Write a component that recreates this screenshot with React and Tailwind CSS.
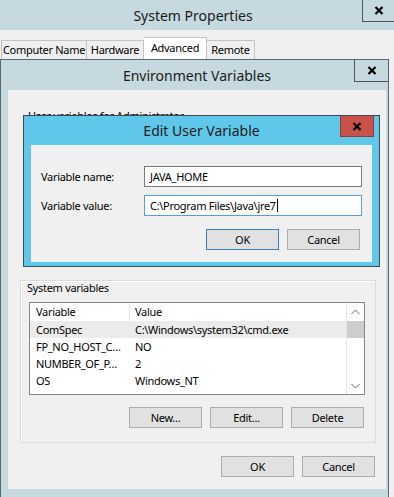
import React from "react";

const XGlyph = () => (
  <svg width="10" height="9" viewBox="0 0 10 9">
    <path d="M1.5 1l7 7M8.5 1l-7 7" stroke="#000" strokeWidth="2.2" />
  </svg>
);

const Chevron = ({ up }) => (
  <svg width="9" height="6" viewBox="0 0 9 6">
    <path d={up ? "M0.5 5l4-4 4 4" : "M0.5 1l4 4 4-4"} stroke="#606060" strokeWidth="1" fill="none" />
  </svg>
);

const Btn = ({ children, primary }) => (
  <div
    className={
      primary
        ? "flex h-[21px] w-[73px] items-center justify-center border border-[#3c7fb1] bg-[#e1e1e1]"
        : "flex h-[21px] w-[73px] items-center justify-center border border-[#adadad] bg-[#e1e1e1]"
    }
  >
    {children}
  </div>
);

const rows = [
  ["ComSpec", "C:\\Windows\\system32\\cmd.exe"],
  ["FP_NO_HOST_C…", "NO"],
  ["NUMBER_OF_P…", "2"],
  ["OS", "Windows_NT"],
  ["Path", "%SystemRoot%\\system32;%SystemRoot%;%Sys…"],
];

export default function App() {
  return (
    <div className="relative h-[497px] w-[394px] overflow-hidden whitespace-nowrap bg-[#f0f0f0] font-['Noto_Sans','Open_Sans',sans-serif] text-[11px] leading-[14px] tracking-[-0.3px] text-black">
      {/* System Properties window behind */}
      <div className="flex h-[30px] bg-[#c5d9df]">
        <div className="flex-1 pl-[24px] pt-[6px] text-center text-[14px] leading-[20px] tracking-normal text-[#1a1a1a]">
          System Properties
        </div>
        <div className="flex h-[22px] w-[32px] items-center justify-center border-b border-l border-[#4d5357]">
          <XGlyph />
        </div>
      </div>
      <div className="flex items-start pl-[1px] pt-[7px]">
        <div className="mt-[3px] flex h-[19px] w-[86px] items-center justify-center border border-b-0 border-[#c4c4c4]">
          Computer Name
        </div>
        <div className="mt-[3px] flex h-[19px] w-[57px] items-center justify-center border border-b-0 border-l-0 border-[#c4c4c4]">
          Hardware
        </div>
        <div className="flex h-[23px] w-[63px] items-center justify-center border border-b-0 border-l-0 border-[#c4c4c4] bg-white pb-[3px]">
          Advanced
        </div>
        <div className="mt-[3px] flex h-[19px] w-[48px] items-center justify-center border border-b-0 border-l-0 border-[#c4c4c4]">
          Remote
        </div>
      </div>

      {/* Environment Variables window */}
      <div className="absolute left-0 top-[59px] flex h-[439px] w-[389px] flex-col border border-[#5d666b] bg-[#c5d9df]">
        <div className="flex h-[30px] shrink-0">
          <div className="flex-1 pl-[39px] pt-[6px] text-center text-[14px] leading-[20px] tracking-normal text-[#1a1a1a]">
            Environment Variables
          </div>
          <div className="flex h-[22px] w-[34px] items-center justify-center border-b border-l border-[#4d5357]">
            <XGlyph />
          </div>
        </div>
        <div className="mb-[8px] ml-[7px] mr-[2px] flex flex-1 flex-col bg-[#f0f0f0]">
          <div className="pl-[20px] pt-[19px]">User variables for Administrator</div>

          {/* System variables group */}
          <div className="ml-[12px] mt-[157px] flex h-[163px] w-[356px] flex-col border border-[#dcdcdc] shadow-[inset_1px_1px_0_#ffffff]">
            <div className="pl-[6px]">System variables</div>
            <div className="ml-[8px] mt-[7px] flex h-[93px] w-[336px] overflow-hidden border border-[#828790] bg-white">
              <div className="flex-1 overflow-hidden">
                <div className="flex h-[18px] items-center">
                  <div className="flex h-full w-[100px] items-center border-r border-[#e5e5e5] pl-[6px]">Variable</div>
                  <div className="pl-[5px]">Value</div>
                </div>
                {rows.map(([k, v], i) => (
                  <div
                    key={k}
                    className={
                      i === 0
                        ? "flex h-[17px] items-center bg-[#ebebeb]"
                        : "flex h-[17px] items-center"
                    }
                  >
                    <div className="w-[100px] shrink-0 pl-[6px]">{k}</div>
                    <div className="pl-[5px]">{v}</div>
                  </div>
                ))}
              </div>
              <div className="flex w-[18px] flex-col border-l border-[#e3e3e3] bg-white">
                <div className="flex h-[18px] items-center justify-center">
                  <Chevron up />
                </div>
                <div className="h-[17px] bg-[#cdcdcd]" />
                <div className="flex-1" />
                <div className="flex h-[17px] items-center justify-center">
                  <Chevron />
                </div>
              </div>
            </div>
            <div className="mt-[12px] flex justify-end gap-[8px] pr-[11px]">
              <Btn>New...</Btn>
              <Btn>Edit...</Btn>
              <Btn>Delete</Btn>
            </div>
          </div>

          <div className="mt-[13px] flex justify-end gap-[8px] pr-[11px]">
            <Btn>OK</Btn>
            <Btn>Cancel</Btn>
          </div>
        </div>
      </div>

      {/* Edit User Variable dialog */}
      <div className="absolute left-[23px] top-[115px] flex h-[152px] w-[357px] flex-col border border-[#3d4a50] bg-[#5fc8ea]">
        <div className="flex h-[29px] shrink-0">
          <div className="flex-1 pl-[39px] pt-[5px] text-center text-[14px] leading-[20px] tracking-normal text-[#1a1a1a]">
            Edit User Variable
          </div>
          <div className="mr-[5px] flex h-[21px] w-[34px] items-center justify-center border border-t-0 border-[#8a3d36] bg-[#c8524a]">
            <XGlyph />
          </div>
        </div>
        <div className="mx-[7px] flex h-[117px] flex-col bg-[#f0f0f0]">
          <div className="mt-[21px] flex items-center">
            <div className="w-[113px] pl-[10px]">Variable name:</div>
            <div className="flex h-[21px] w-[218px] items-center border border-[#7a7a7a] bg-white pl-[5px]">
              JAVA_HOME
            </div>
          </div>
          <div className="mt-[8px] flex items-center">
            <div className="w-[113px] pl-[10px]">Variable value:</div>
            <div className="flex h-[21px] w-[218px] items-center border border-[#569de5] bg-white pl-[5px]">
              C:\Program Files\Java\jre7
              <span className="ml-[1px] h-[13px] w-[1px] bg-black" />
            </div>
          </div>
          <div className="mt-[13px] flex justify-end gap-[8px] pr-[12px]">
            <Btn primary>OK</Btn>
            <Btn>Cancel</Btn>
          </div>
        </div>
      </div>
    </div>
  );
}
